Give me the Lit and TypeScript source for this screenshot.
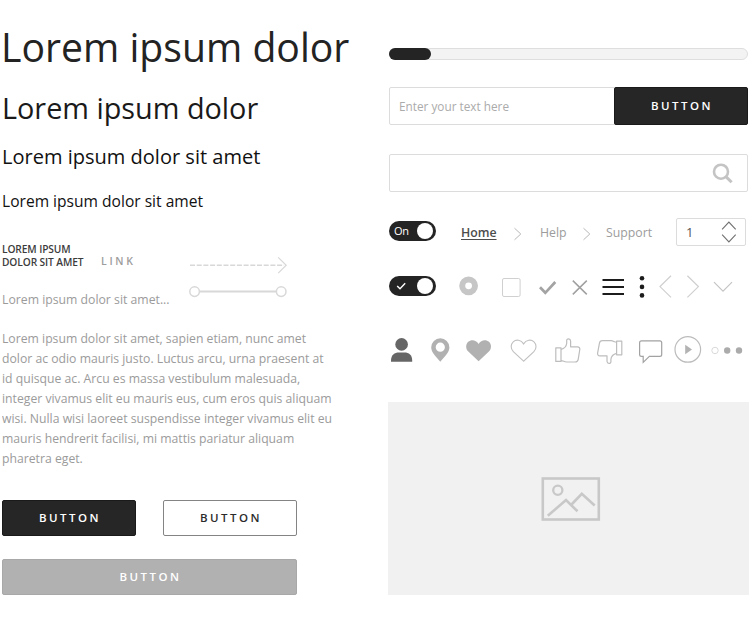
import { LitElement, html, svg, css } from "lit";
import { customElement, property } from "lit/decorators.js";

type Shape = ReturnType<typeof svg>;

/* Each glyph is a strip of a shared canvas: [x, y, width, height, shapes] */
type Glyph = [number, number, number, number, Shape];

const draw = ([x, y, w, h, shapes]: Glyph) =>
  html`<svg viewBox="${x} ${y} ${w} ${h}" width=${w} height=${h}>${shapes}</svg>`;

const heart = (x: number) =>
  `M${x} 361.2L${x - 10.3} 351.6C${x - 13.2} 348.8 ${x - 13} 344.2 ${x - 10.4} 341.8C${x - 7.5} 339.2 ${x - 2.6} 339.6 ${x} 343.9C${x + 2.6} 339.6 ${x + 7.5} 339.2 ${x + 10.4} 341.8C${x + 13} 344.2 ${x + 13.2} 348.8 ${x + 10.3} 351.6Z`;

const controls: Glyph[] = [
  [448, 270, 42, 34, svg`<circle cx="468.6" cy="285.8" r="6.4" fill="none" stroke="#c6c6c6" stroke-width="6"/>`],
  [490, 270, 38, 34, svg`<rect x="502.5" y="278.5" width="17.6" height="18" rx="1.5" fill="none" stroke="#d0d0d0"/>`],
  [528, 270, 34, 34, svg`<path d="M540 287.2L545.3 292.8L555.3 282" fill="none" stroke="#a3a3a3" stroke-width="2.7"/>`],
  [562, 270, 34, 34, svg`<path d="M572.8 280.6L586.8 294.4M586.8 280.6L572.8 294.4" fill="none" stroke="#a0a0a0" stroke-width="1.5"/>`],
  [596, 270, 36, 34, svg`<path d="M602.5 280H624M602.5 287H624M602.5 294H624" stroke="#1c1c1c" stroke-width="2"/>`],
  [632, 270, 20, 34, svg`<g fill="#1c1c1c"><circle cx="642" cy="278.2" r="2.3"/><circle cx="642" cy="286.9" r="2.3"/><circle cx="642" cy="295.4" r="2.3"/></g>`],
  [652, 270, 26, 34, svg`<path d="M671 275.8L660 286.6L671 297.4" fill="none" stroke="#cfcfcf" stroke-width="1.2"/>`],
  [678, 270, 28, 34, svg`<path d="M687.4 275.8L698.4 286.6L687.4 297.4" fill="none" stroke="#cfcfcf" stroke-width="1.2"/>`],
  [706, 270, 44, 34, svg`<path d="M714 282.2L723 291.2L732 282.2" fill="none" stroke="#c4c4c4" stroke-width="1.2"/>`],
];

const symbols: Glyph[] = [
  [388, 332, 37, 38, svg`<g fill="#666"><circle cx="401.6" cy="344.4" r="6.3"/><path d="M391 361.8V360.5C391 355 394.5 352.4 399 352.4H404.3C409 352.4 412.2 355 412.2 360.5V361.8Z"/></g>`],
  [425, 332, 32, 38, svg`<path fill="#b1b1b1" fill-rule="evenodd" d="M440.3 361.7C436.5 357 431.2 352.4 431.2 347.4A9.1 9.1 0 0 1 449.4 347.4C449.4 352.4 444.1 357 440.3 361.7ZM440.3 342.6A4.6 4.6 0 1 0 440.3 351.8A4.6 4.6 0 1 0 440.3 342.6Z"/>`],
  [457, 332, 44, 38, svg`<path d=${heart(478.6)} fill="#b1b1b1"/>`],
  [501, 332, 46, 38, svg`<path d=${heart(523.6)} fill="none" stroke="#c0c0c0" stroke-width="1.1"/>`],
  [547, 332, 42, 38, svg`<g fill="none" stroke="#bdbdbd" stroke-width="1.2" stroke-linejoin="round"><path d="M555.8 347.8H561V361.4H555.8Z"/><path d="M561 349.3C564.5 348.5 566.4 346 566.7 343.2V340.5C566.7 338.2 570.4 338.2 570.6 341V346.8H577.5C579.2 346.8 580 348 579.8 349.5L578.2 359.4C577.9 361.2 576.8 362 575.2 362H566.5C564.2 362 563.4 360.6 561 360.6"/></g>`],
  [589, 332, 42, 38, svg`<g fill="none" stroke="#bdbdbd" stroke-width="1.2" stroke-linejoin="round"><path d="M616.6 341.2H621.8V354.8H616.6Z"/><path d="M616.6 342.2C614.2 342.2 613.4 340.7 611.1 340.7H602.4C600.8 340.7 599.7 341.5 599.4 343.3L597.6 353.1C597.4 354.6 598.2 355.8 599.9 355.8H607V361.2C607.2 364 610.9 364 610.9 361.7V359.3C611.2 356.6 613.1 354.2 616.6 353.3"/></g>`],
  [631, 332, 40, 38, svg`<path d="M641.5 340.8H659.8Q661.7 340.8 661.7 342.7V354.4Q661.7 356.3 659.8 356.3H649.4L643.2 362.4V356.3H641.5Q639.6 356.3 639.6 354.4V342.7Q639.6 340.8 641.5 340.8Z" fill="none" stroke="#a2a2a2" stroke-width="1.2"/>`],
  [671, 332, 33, 38, svg`<circle cx="687.8" cy="349.4" r="12.8" fill="none" stroke="#bcbcbc" stroke-width="1.2"/><path d="M685.2 344.8V354.2L692 349.5Z" fill="#b3b3b3"/>`],
  [704, 332, 46, 38, svg`<circle cx="715" cy="350.5" r="3.2" fill="none" stroke="#dadada"/><circle cx="727.2" cy="350.5" r="3.2" fill="#ababab"/><circle cx="739" cy="350.5" r="3.2" fill="#ababab"/>`],
];

const separator = html`<svg class="sep" width="10" height="14" viewBox="0 0 10 14"><path d="M1.5 1.2L7.8 7L1.5 12.8" fill="none" stroke="#b8b8b8"/></svg>`;

@customElement("kit-toggle")
class KitToggle extends LitElement {
  @property() label = "";
  static styles = css`
    :host { display: flex; box-sizing: border-box; width: 47px; height: 20px; padding: 0 3px 0 5px;
      align-items: center; justify-content: space-between; border-radius: 10px; background: #242424; color: #fff;
      font: 11px/20px "Open Sans", sans-serif; letter-spacing: -0.3px; }
    .knob { width: 16px; height: 16px; border-radius: 50%; background: #fff; }
    .tick { margin-left: 2px; }
  `;
  render() {
    return html`${this.label
        ? html`<span>${this.label}</span>`
        : html`<svg class="tick" width="12" height="10" viewBox="0 0 12 10"><path d="M1.2 4.9L4 7.8L9.2 2.2" fill="none" stroke="#fff" stroke-width="1.4"/></svg>`}
      <span class="knob"></span>`;
  }
}

@customElement("app-root")
class AppRoot extends LitElement {
  static styles = css`
    :host { display: grid; grid-template-columns: 388px 362px; width: 750px; height: 627px; overflow: hidden;
      background: #fff; color: #232323; font-family: "Open Sans", sans-serif; }
    svg { display: block; flex: none; }
    .left { padding: 19px 0 0 2px; }
    h1, h2, h3, h4, p { margin: 0; font-weight: 400; white-space: nowrap; transform-origin: 0 0; }
    h1 { font-size: 40.5px; line-height: 56px; transform: scaleX(0.967); margin-left: -1px; }
    h2 { font-size: 29.4px; line-height: 40px; transform: scaleX(0.98); margin-top: 13px; color: #1a1a1a; }
    h3 { font-size: 20.5px; line-height: 28px; transform: scaleX(0.977); margin-top: 14px; color: #111; }
    h4 { font-size: 16px; line-height: 22px; transform: scaleX(0.974); margin-top: 20px; color: #111; }
    .mid { display: flex; height: 76px; margin-top: 30px; }
    .cap { width: 99px; padding-top: 1px; font-size: 10.5px; line-height: 13px; font-weight: 600; letter-spacing: -0.1px;
      transform: scaleX(0.97); transform-origin: 0 0; color: #3c3c3c; }
    .link { width: 86px; padding-top: 12px; font-size: 10.5px; line-height: 14px; font-weight: 600; letter-spacing: 2.7px; color: #9d9d9d; }
    .lead { font-size: 13.4px; line-height: 20px; transform: scaleX(0.914); color: #9b9b9b; margin-top: -29px; }
    .body { font-size: 13.4px; line-height: 20px; transform: scaleX(0.912); color: #9b9b9b; margin-top: 19px; }
    .btn { box-sizing: border-box; display: flex; align-items: center; justify-content: center; height: 36px;
      border: 1px solid #1a1a1a; border-radius: 2px; background: #262626; color: #fff; padding-bottom: 2px;
      font-size: 11.5px; font-weight: 600; letter-spacing: 2.5px; text-indent: 2px; }
    .pair { display: flex; justify-content: space-between; width: 295px; margin: 32px 0 23px; }
    .pair .btn { width: 134px; }
    .btn.ghost { background: #fff; border-color: #848484; color: #2b2b2b; }
    .btn.mute { width: 295px; background: #b1b1b1; border-color: #a8a8a8; }
    .right { padding-top: 48px; }
    .track { box-sizing: border-box; width: 359px; height: 12px; margin-left: 1px; border: 1px solid #dedede; border-radius: 6px; background: #f3f3f3; }
    .fill { height: 12px; margin: -1px; border-radius: 6px; background: #242424; }
    .field { display: flex; box-sizing: border-box; width: 359px; height: 38px; margin: 27px 0 0 1px;
      border: 1px solid #dcdcdc; border-radius: 2px; align-items: center; justify-content: space-between; }
    .hint { margin-left: 9px; font-size: 13px; line-height: 18px; padding-bottom: 1px; transform: scaleX(0.906); transform-origin: 0 0; color: #ababab; }
    .field .btn { width: 134px; height: 38px; margin-right: -1px; }
    .search { margin-top: 29px; justify-content: flex-end; padding-right: 12px; }
    .crumbs { display: flex; align-items: center; height: 28px; margin: 26px 0 0 1px; font-size: 13px; color: #9c9c9c; }
    .crumbs kit-toggle { margin-top: -2px; }
    .home, .help, .support { transform: scaleX(0.945); transform-origin: 0 0; }
    .home { margin-left: 25px; width: 36px; font-weight: 600; color: #4c4c4c; text-decoration: underline; text-underline-offset: 2px; }
    .sep { margin: 3px 17px 0 16px; }
    .help { width: 26px; }
    .support { width: 70px; margin-left: -3px; }
    .count { box-sizing: border-box; display: flex; align-items: center; justify-content: space-between; width: 70px; flex: none;
      height: 28px; padding: 0 8px 0 9px; border: 1px solid #dcdcdc; border-radius: 2px; color: #555; font-size: 13px; }
    .icons { display: flex; }
    .controls { margin-top: 24px; }
    .slot { display: flex; width: 59px; padding: 6px 0 0 1px; height: 28px; }
    .symbols { margin-top: 28px; }
    .photo { display: flex; align-items: center; justify-content: center; width: 361px; height: 193px; margin-top: 32px; background: #f1f1f1; }
    .photo svg { margin: 0 0 0 5px; }
  `;

  progress = 42;

  render() {
    return html`
      <section class="left">
        <h1>Lorem ipsum dolor</h1>
        <h2>Lorem ipsum dolor</h2>
        <h3>Lorem ipsum dolor sit amet</h3>
        <h4>Lorem ipsum dolor sit amet</h4>
        <div class="mid">
          <div class="cap">LOREM IPSUM<br />DOLOR SIT AMET</div>
          <div class="link">LINK</div>
          ${draw([187, 242, 105, 60, svg`<g fill="none" stroke="#d8d8d8">
            <path d="M190 265.2H284" stroke-width="1.5" stroke-dasharray="5 1.7"/>
            <path d="M278.2 257.4L286.2 265.2L278.2 273.2" stroke-width="1.2"/>
            <path d="M199.4 291.6H276.4" stroke-width="2"/>
            <circle cx="194.6" cy="291.6" r="4.8" stroke-width="1.5"/><circle cx="281.2" cy="291.6" r="4.8" stroke-width="1.5"/></g>`])}
        </div>
        <p class="lead">Lorem ipsum dolor sit amet...</p>
        <p class="body">Lorem ipsum dolor sit amet, sapien etiam, nunc amet<br />dolor ac odio mauris justo. Luctus arcu, urna praesent at<br />id quisque ac. Arcu es massa vestibulum malesuada,<br />integer vivamus elit eu mauris eus, cum eros quis aliquam<br />wisi. Nulla wisi laoreet suspendisse integer vivamus elit eu<br />mauris hendrerit facilisi, mi mattis pariatur aliquam<br />pharetra eget.</p>
        <div class="pair"><div class="btn">BUTTON</div><div class="btn ghost">BUTTON</div></div>
        <div class="btn mute">BUTTON</div>
      </section>
      <section class="right">
        <div class="track"><div class="fill" style="width:${this.progress}px"></div></div>
        <div class="field"><span class="hint">Enter your text here</span><div class="btn">BUTTON</div></div>
        <div class="field search">
          <svg width="24" height="24" viewBox="711 162 24 24"><g fill="none" stroke="#c4c4c4"><circle cx="721" cy="172.7" r="7" stroke-width="2.6"/><path d="M725.9 177.6L731.6 183.3" stroke-width="3"/></g></svg>
        </div>
        <div class="crumbs">
          <kit-toggle label="On"></kit-toggle>
          <span class="home">Home</span>${separator}<span class="help">Help</span>${separator}<span class="support">Support</span>
          <div class="count"><span>1</span>
            <svg width="16" height="24" viewBox="720.5 220.5 16 24"><path d="M721.6 229.8L728.4 222.6L735.2 229.8M721.6 235.2L728.4 242.4L735.2 235.2" fill="none" stroke="#707070" stroke-width="1.1"/></svg>
          </div>
        </div>
        <div class="icons controls"><div class="slot"><kit-toggle></kit-toggle></div>${controls.map(draw)}</div>
        <div class="icons symbols">${symbols.map(draw)}</div>
        <div class="photo">
          <svg width="62" height="46" viewBox="540.5 475.5 62 46"><g fill="none" stroke="#c8c8c8" stroke-width="2.6"><rect x="543.3" y="478" width="56" height="41"/><circle cx="558.3" cy="489.8" r="4.6" stroke-width="2.3"/><path d="M548.3 515.3L566.5 499.5L578 510.8M571.5 504.5L582.3 493.4L595.2 505"/></g></svg>
        </div>
      </section>`;
  }
}
